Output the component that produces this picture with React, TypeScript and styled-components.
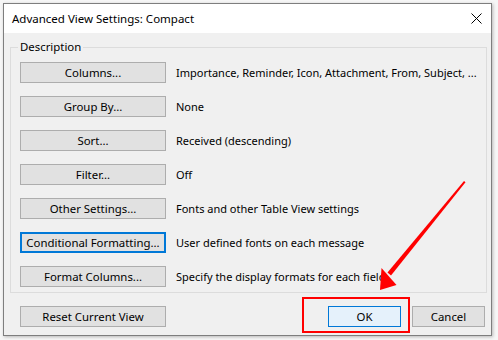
import * as React from "react";
import styled, { createGlobalStyle } from "styled-components";

const GlobalStyle = createGlobalStyle`
  body {
    margin: 0;
    background: #f4f4f4;
    font-family: "Noto Sans", "Open Sans", Arial, sans-serif;
  }
`

const Screen = styled.div`
  position: relative;
  width: 498px;
  height: 340px;
  padding: 3px 0 0 3px;
  box-sizing: border-box;
  overflow: hidden;
  background: #f6f6f6;
`

const Dialog = styled.div`
  width: 489px;
  height: 333px;
  box-sizing: border-box;
  border: 1px solid #7e7e7e;
  display: flex;
  flex-direction: column;
  background: #f0f0f0;
  box-shadow: 1px 1px 3px rgba(0, 0, 0, 0.25);
`

const TitleBar = styled.div`
  height: 29px;
  flex: none;
  background: #ffffff;
  display: flex;
  align-items: center;
  justify-content: space-between;
  padding: 0 9px 0 8px;
  font-size: 11.5px;
  color: #000;
`

const Body = styled.div`
  flex: 1;
  padding: 6px 6px 0 6px;
  display: flex;
  flex-direction: column;
`

const Group = styled.fieldset`
  margin: 0;
  border: 1px solid #dcdcdc;
  padding: 7px 9px 5px 9px;
  display: flex;
  flex-direction: column;
  gap: 13px;
`

const Legend = styled.legend`
  font-size: 11.4px;
  line-height: 16px;
  padding: 0 2px;
  margin-left: -2px;
  color: #000;
`

const Row = styled.div`
  display: flex;
  align-items: center;
  gap: 10px;
`

const Button = styled.button<{ $focused?: boolean; $primary?: boolean; $w?: number }>`
  width: ${p => p.$w ?? 146}px;
  height: 21px;
  box-sizing: border-box;
  flex: none;
  padding: 0;
  font-family: inherit;
  font-size: 11.4px;
  color: #000;
  background: ${p => (p.$primary ? "#e5f1fb" : "#e1e1e1")};
  border: ${p => (p.$focused ? "2px solid #0078d7" : p.$primary ? "1px solid #0078d7" : "1px solid #adadad")};
`

const Desc = styled.span`
  font-size: 11px;
  color: #000;
  white-space: nowrap;
`

const Footer = styled.div`
  display: flex;
  align-items: center;
  margin-top: 13px;
  padding: 0 0 0 10px;
  gap: 11px;
`

const Spacer = styled.div`
  flex: 1;
`

const Highlight = styled.div`
  position: absolute;
  left: 302px;
  top: 297px;
  width: 108px;
  height: 36px;
  box-sizing: border-box;
  border: 2px solid #ff0000;
`

const Arrow = styled.svg`
  position: absolute;
  left: 0;
  top: 0;
  pointer-events: none;
`

const rows = [
  ["Columns...", "Importance, Reminder, Icon, Attachment, From, Subject, ..."],
  ["Group By...", "None"],
  ["Sort...", "Received (descending)"],
  ["Filter...", "Off"],
  ["Other Settings...", "Fonts and other Table View settings"],
  ["Conditional Formatting...", "User defined fonts on each message"],
  ["Format Columns...", "Specify the display formats for each field"],
]

function App() {
  return (
    <Screen>
      <GlobalStyle />
      <Dialog>
        <TitleBar>
          <span>Advanced View Settings: Compact</span>
          <svg width="11" height="11" viewBox="0 0 11 11">
            <path d="M0.5 0.5 L10.5 10.5 M10.5 0.5 L0.5 10.5" stroke="#000" strokeWidth="1" />
          </svg>
        </TitleBar>
        <Body>
          <Group>
            <Legend>Description</Legend>
            {rows.map(([label, text], i) => (
              <Row key={label}>
                <Button $focused={i === 5}>{label}</Button>
                <Desc>{text}</Desc>
              </Row>
            ))}
          </Group>
          <Footer>
            <Button>Reset Current View</Button>
            <Spacer />
            <Button $primary $w={73}>OK</Button>
            <Button $w={73}>Cancel</Button>
          </Footer>
        </Body>
      </Dialog>
      <Highlight />
      <Arrow width="498" height="340" viewBox="0 0 498 340">
        <polygon points="464,181 465.5,182.2 391,275.5 387.5,272.5" fill="#ff0000" />
        <polygon points="380,290 381.5,268 396.5,285" fill="#ff0000" />
      </Arrow>
    </Screen>
  );
}

export default App;
